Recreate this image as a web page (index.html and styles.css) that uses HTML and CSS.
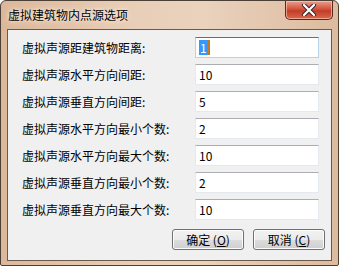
FILE: index.html
```html
<!DOCTYPE html>
<html lang="zh-CN">
  <head>
    <meta charset="UTF-8" />
    <title>虚拟建筑物内点源选项</title>
    <link rel="stylesheet" href="styles.css">
  </head>
  <body>
    <div class="window">
      <div class="titlebar">
        <span class="title">虚拟建筑物内点源选项</span>
        <button class="close" title="关闭">
          <svg width="16" height="12" viewBox="0 0 16 12">
            <path d="M3 1 L13 11 M13 1 L3 11" stroke="#3a2a2a" stroke-width="4.2" stroke-linecap="round"/>
            <path d="M3 1 L13 11 M13 1 L3 11" stroke="#ffffff" stroke-width="2.2" stroke-linecap="round"/>
          </svg>
        </button>
      </div>
      <div class="client">
        <div class="form">
          <label>虚拟声源距建筑物距离:</label>
          <div class="field focus"><span class="sel">1</span><span class="caret"></span></div>
          <label>虚拟声源水平方向间距:</label>
          <div class="field">10</div>
          <label>虚拟声源垂直方向间距:</label>
          <div class="field">5</div>
          <label>虚拟声源水平方向最小个数:</label>
          <div class="field">2</div>
          <label>虚拟声源水平方向最大个数:</label>
          <div class="field">10</div>
          <label>虚拟声源垂直方向最小个数:</label>
          <div class="field">2</div>
          <label>虚拟声源垂直方向最大个数:</label>
          <div class="field">10</div>
        </div>
        <div class="actions">
          <button class="btn">确定 (<u>O</u>)</button>
          <button class="btn">取消 (<u>C</u>)</button>
        </div>
      </div>
    </div>
  </body>
</html>
```

FILE: styles.css
```css
html, body {
    margin: 0;
    padding: 0;
}

body {
    width: 339px;
    height: 266px;
    background: #ffffff;
    font-family: "Noto Sans CJK SC", "DejaVu Sans", sans-serif;
    font-size: 12px;
    color: #000;
}

.window {
    box-sizing: border-box;
    width: 339px;
    height: 266px;
    border: 1px solid #4a4036;
    border-radius: 6px 6px 2px 2px;
    background: linear-gradient(to right, #dcb89b, #e9cfb8 40%, #ead2bd 60%, #dcbb9f);
    display: flex;
    flex-direction: column;
    padding: 0 6px 4px 6px;
}

/* title bar */
.titlebar {
    height: 28px;
    display: flex;
    align-items: flex-start;
    justify-content: space-between;
}
.title {
    margin-top: 5px;
    margin-left: 1px;
    line-height: 18px;
    text-shadow: 0 0 6px #f8efe6, 0 0 3px #f8efe6;
}
.close {
    width: 48px;
    height: 19px;
    margin-right: -1px;
    border: 1px solid #5a2a22;
    border-top: none;
    border-radius: 0 0 5px 5px;
    background: linear-gradient(#e8a090, #d2533c 45%, #c23c26 55%, #d66a50);
    box-shadow: inset 0 0 0 1px rgba(255, 210, 190, 0.6);
    display: flex;
    align-items: center;
    justify-content: center;
    padding: 0;
}

/* client area */
.client {
    flex: 1;
    background: #f0f0f0;
    border: 1px solid #6b5a4c;
    padding: 7px 12px 0 14px;
}

.form {
    display: grid;
    grid-template-columns: 1fr 124px;
    grid-auto-rows: 21px;
    row-gap: 6px;
}
.form label {
    line-height: 21px;
    white-space: nowrap;
}
.field {
    box-sizing: border-box;
    border: 1px solid #e3e9ef;
    border-top-color: #abadb3;
    background: #fff;
    padding-left: 3px;
    line-height: 19px;
    display: flex;
    align-items: center;
}
.field.focus {
    border-color: #b5d4ea;
    border-top-color: #3d7bad;
}
.sel {
    background: #3399ff;
    color: #fff;
    line-height: 15px;
    padding: 0 1px;
}
.caret {
    width: 2px;
    height: 15px;
    background: #c87820;
}

.actions {
    display: flex;
    justify-content: flex-end;
    gap: 9px;
    margin-top: 9px;
    margin-right: -6px;
}
.btn {
    width: 72px;
    height: 21px;
    border: 1px solid #707070;
    border-radius: 3px;
    background: linear-gradient(#f2f2f2, #ebebeb 50%, #dddddd 51%, #cfcfcf);
    box-shadow: inset 0 0 0 1px #fcfcfc;
    font-family: inherit;
    font-size: 12px;
    padding: 0;
    line-height: 17px;
}
```
